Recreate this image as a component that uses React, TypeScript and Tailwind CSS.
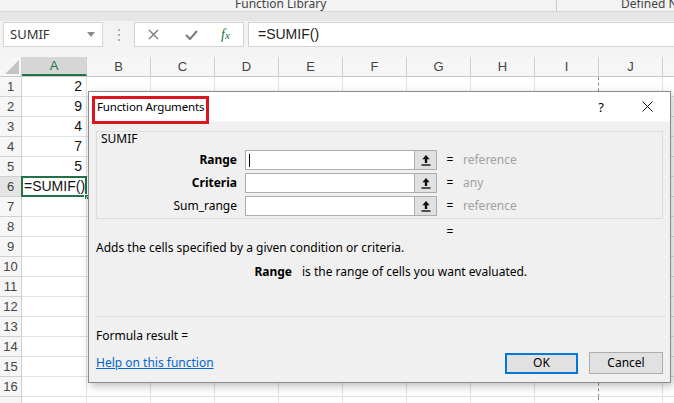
import React from 'react';

const UI = "font-['Noto_Sans','Open_Sans',sans-serif]";
const CELL = "font-['Liberation_Sans',Arial,sans-serif]";

const COLS = ['A', 'B', 'C', 'D', 'E', 'F', 'G', 'H', 'I', 'J'];
const VALUES: Record<number, string> = { 1: '2', 2: '9', 3: '4', 4: '7', 5: '5' };

const colWidth = (c: string) => (c === 'A' ? 'w-[65px]' : 'w-[64px]');

const RibbonStrip = () => (
    <div className="h-[12px] bg-[#f3f3f3] border-b border-[#d6d6d6] flex overflow-hidden text-[12px] text-[#444]">
        <div className={`${UI} shrink-0 w-[556px] leading-[12px] -mt-[2px] pl-[235px]`}>Function Library</div>
        <div className="shrink-0 w-px h-full bg-[#c8c8c8]" />
        <div className={`${UI} shrink-0 leading-[12px] -mt-[2px] pl-[64px] whitespace-nowrap`}>Defined Names</div>
    </div>
);

const FormulaBar = () => (
    <div className="bg-[#f3f3f3]">
        <div className="h-[9px] bg-[#e6e6e6]" />
        <div className="h-[26px] flex items-stretch pt-px">
            <div className="ml-[3px] w-[100px] bg-white border border-[#d4d4d4] flex items-center justify-between pl-[6px] pr-[7px]">
                <span className={`${UI} text-[13px] text-[#333]`}>SUMIF</span>
                <svg width="8" height="5" viewBox="0 0 8 5"><path d="M0 0h8L4 5z" fill="#8a8a8a" /></svg>
            </div>
            <div className="w-[31px] flex flex-col items-center justify-center gap-[3px]">
                <span className="w-[2px] h-[2px] bg-[#b0b0b0]" />
                <span className="w-[2px] h-[2px] bg-[#b0b0b0]" />
                <span className="w-[2px] h-[2px] bg-[#b0b0b0]" />
            </div>
            <div className="w-[110px] bg-white border border-[#d4d4d4] flex items-center pl-[13px]">
                <svg width="11" height="11" viewBox="0 0 11 11" className="mr-[26px]">
                    <path d="M1 1l9 9M10 1l-9 9" stroke="#7a7a7a" strokeWidth="1.4" />
                </svg>
                <svg width="13" height="10" viewBox="0 0 13 10" className="mr-[23px]">
                    <path d="M1 5l4 4 7-8" stroke="#7a7a7a" strokeWidth="2" fill="none" />
                </svg>
                <span className="font-['Liberation_Serif',serif] italic text-[14px] text-[#217346] leading-none">f<span className="text-[11px]">x</span></span>
            </div>
            <div className="ml-[4px] flex-1 bg-white border-y border-l border-[#d4d4d4] flex items-center pl-[9px]">
                <span className={`${CELL} text-[14px] text-[#222]`}>=SUMIF()</span>
            </div>
        </div>
        <div className="h-[10px]" />
    </div>
);

const ColumnHeaders = () => (
    <div className="flex h-[20px] bg-[#f6f6f6] border-b border-[#c9c9c9]">
        <div className="w-[22px] h-full border-r border-[#d0d0d0] relative">
            <svg width="14" height="14" viewBox="0 0 14 14" className="absolute right-[2px] bottom-[2px]">
                <path d="M14 0v14H0z" fill="#c4c4c4" />
            </svg>
        </div>
        {COLS.map(c => (
            <div
                key={c}
                className={`${colWidth(c)} h-full flex items-center justify-center ${CELL} text-[13px] ${
                    c === 'A' ? 'bg-[#d6d6d6] text-[#217346] border-b-2 border-[#217346]' : 'text-[#444]'
                } border-r border-r-[#d0d0d0]`}
            >
                {c}
            </div>
        ))}
        <div className="flex-1" />
    </div>
);

const Row = ({ n, label = true }: { n: number; label?: boolean }) => (
    <div className="flex h-[20px] bg-white">
        <div className={`w-[22px] h-full flex items-center justify-center ${CELL} text-[13px] text-[#444] border-r border-b border-[#d0d0d0] ${n === 6 ? 'bg-[#e4e4e4]' : 'bg-[#f6f6f6]'}`}>
            {label ? n : null}
        </div>
        {COLS.map(c => (
            <div
                key={c}
                className={`${colWidth(c)} h-full border-b border-r border-[#e1e1e1] relative flex items-center ${CELL} text-[14px] text-[#111] ${
                    c === 'I' ? 'border-r-[#8a8a8a] [border-right-style:dashed]' : ''
                }`}
            >
                {c === 'A' && VALUES[n] && <span className="ml-auto pr-[4px]">{VALUES[n]}</span>}
                {c === 'A' && n === 6 && (
                    <>
                        <span className="pl-[2px] whitespace-nowrap">=SUMIF()</span>
                        <div className="absolute -left-px -top-px -right-px -bottom-px border-2 border-[#217346]" />
                        <div className="absolute -right-[4px] -bottom-[4px] w-[6px] h-[6px] bg-[#217346] border border-white" />
                    </>
                )}
            </div>
        ))}
        <div className="flex-1 h-full border-b border-[#e1e1e1]" />
    </div>
);

const CollapseIcon = () => (
    <svg width="10" height="12" viewBox="0 0 10 12">
        <path d="M5 1L1.3 5.2h2.5V9h2.4V5.2h2.5z" fill="#111" />
        <path d="M0.5 11h9" stroke="#111" strokeWidth="1.4" />
    </svg>
);

const ArgRow = ({ label, bold, hint, cursor }: { label: string; bold?: boolean; hint: string; cursor?: boolean }) => (
    <div className="flex h-[20px] items-center">
        <div className={`w-[144px] text-right pr-[8px] ${bold ? 'font-bold' : ''}`}>{label}</div>
        <div className="w-[170px] h-full bg-white border border-[#adadad] flex items-center pl-[3px]">
            {cursor && <span className="w-px h-[13px] bg-black" />}
        </div>
        <div className="w-[22px] h-full bg-[#e1e1e1] border-y border-r border-[#adadad] flex items-center justify-center">
            <CollapseIcon />
        </div>
        <div className="w-[26px] text-center">=</div>
        <div className="text-[#a0a0a0]">{hint}</div>
    </div>
);

const FunctionArguments = () => (
    <div className={`${UI} absolute left-[88px] top-[91px] w-[583px] h-[292px] bg-[#f0f0f0] border border-[#8c8c8c] shadow-[2px_3px_8px_rgba(0,0,0,0.25)] text-[12px] leading-[14px] text-[#000] flex flex-col`}>
        <div className="h-[30px] bg-white flex items-center justify-between pl-[8px] border-b border-[#f7f7f7]">
            <span className="text-[11.5px] tracking-[-0.15px]">Function Arguments</span>
            <div className="flex items-center h-full">
                <span className="w-[46px] text-center text-[13px]">?</span>
                <div className="w-[46px] flex justify-center">
                    <svg width="11" height="11" viewBox="0 0 11 11">
                        <path d="M0.5 0.5l10 10M10.5 0.5l-10 10" stroke="#111" strokeWidth="1" />
                    </svg>
                </div>
            </div>
        </div>
        <div className="absolute left-[3px] top-[4px] w-[117px] h-[28px] border-[3px] border-[#dd1520]" />

        <div className="flex-1 flex flex-col px-[7px] pb-[8px]">
            <div className="mt-[9px] h-[88px] border border-[#dcdcdc] flex flex-col pl-[4px]">
                <div className="h-[12px] leading-[12px] mt-[1px]">SUMIF</div>
                <div className="mt-[5px] flex flex-col gap-[3px]">
                    <ArgRow label="Range" bold hint="reference" cursor />
                    <ArgRow label="Criteria" bold hint="any" />
                    <ArgRow label="Sum_range" hint="reference" />
                </div>
            </div>
            <div className="mt-[6px] ml-[341px] w-[26px] text-center">=</div>
            <div className="mt-[2px]">Adds the cells specified by a given condition or criteria.</div>
            <div className="mt-[10px] flex">
                <span className="w-[206px] text-right font-bold pr-[10px]">Range</span>
                <span>is the range of cells you want evaluated.</span>
            </div>
            <div className="mt-[37px] h-px bg-[#dcdcdc] mr-[-2px]" />
            <div className="mt-[12px]">Formula result =</div>
            <div className="mt-[9px] flex items-center h-[22px]">
                <a className="text-[#0066cc] underline">Help on this function</a>
                <div className="ml-auto flex gap-[11px] items-center">
                    <button className="w-[73px] h-[21px] bg-[#e1e1e1] border-2 border-[#0078d7]">OK</button>
                    <button className="w-[74px] h-[22px] bg-[#e1e1e1] border border-[#adadad]">Cancel</button>
                </div>
            </div>
        </div>
    </div>
);

export default function App() {
    return (
        <div className="relative w-[674px] h-[403px] overflow-hidden bg-white">
            <RibbonStrip />
            <FormulaBar />
            <ColumnHeaders />
            {Array.from({ length: 16 }, (_, i) => (
                <Row key={i} n={i + 1} />
            ))}
            <Row n={17} label={false} />
            <FunctionArguments />
        </div>
    );
}
